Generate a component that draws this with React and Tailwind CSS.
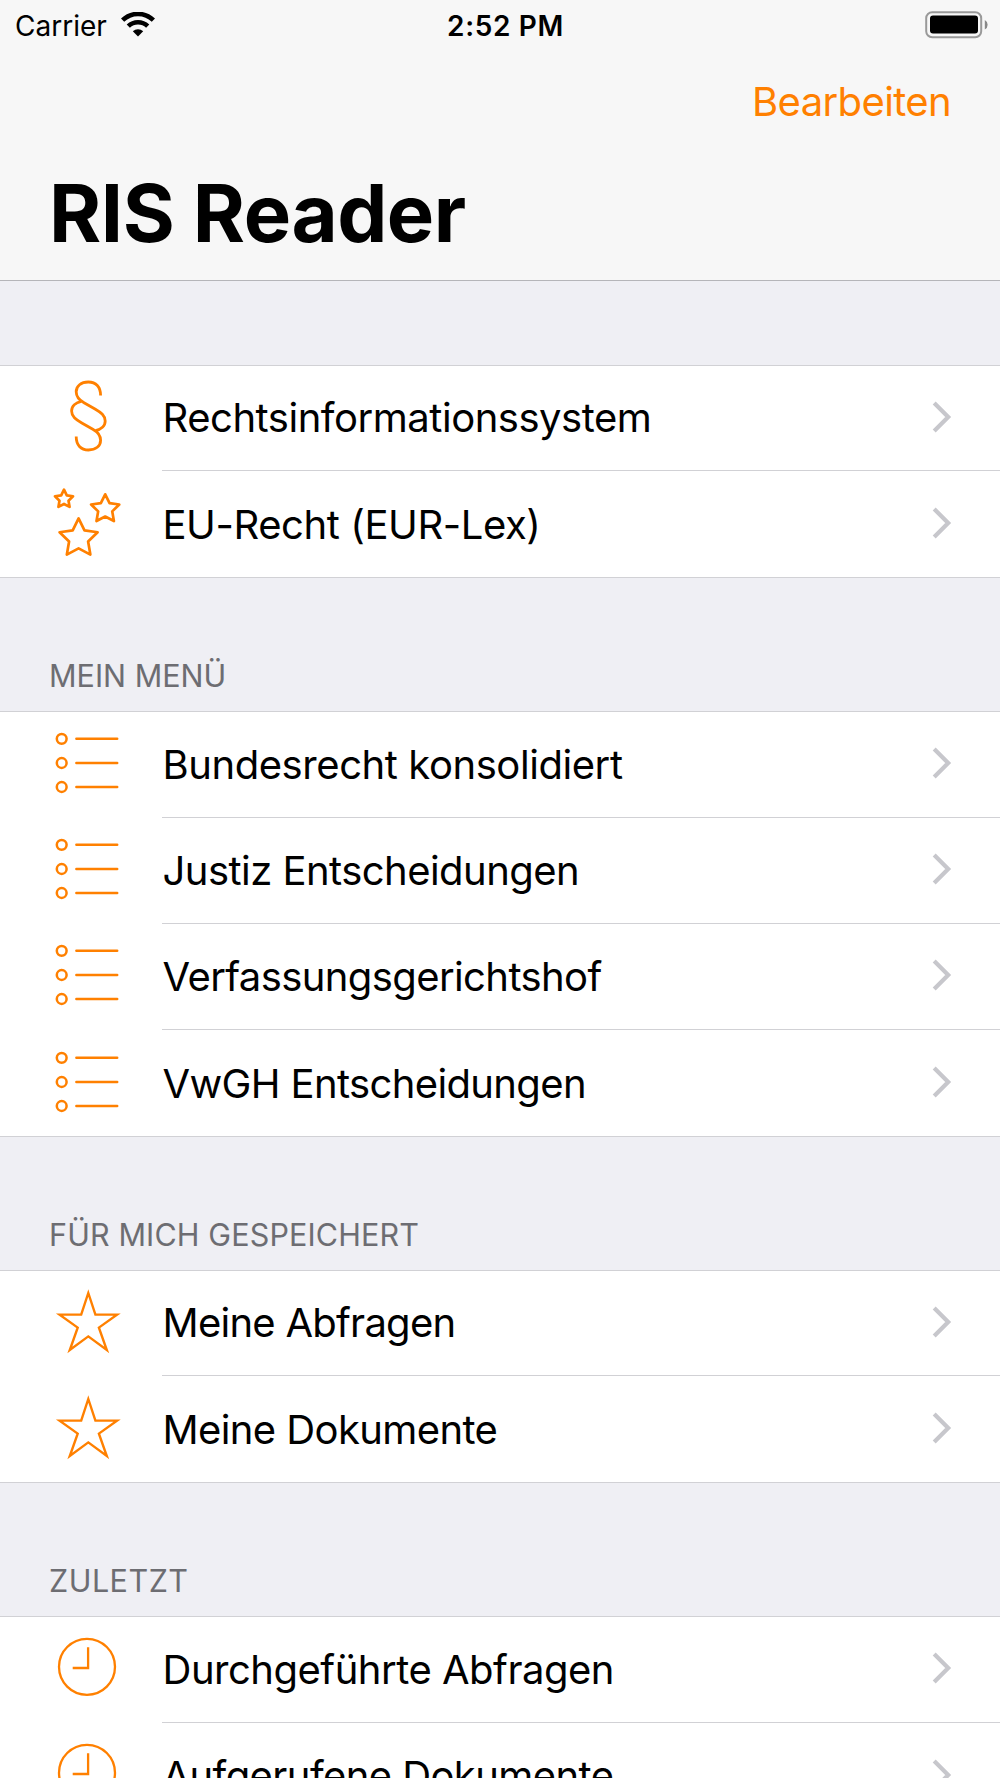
import React from 'react';

const starPath = (cx, cy, r) => {
  const points = [];
  for (let i = 0; i < 10; i++) {
    const radius = i % 2 ? r * 0.5 : r;
    const angle = (Math.PI / 5) * i - Math.PI / 2;
    points.push(`${(cx + radius * Math.cos(angle)).toFixed(2)},${(cy + radius * Math.sin(angle)).toFixed(2)}`);
  }
  return `M${points.join('L')}Z`;
};

const Icon = ({ children, ...props }) => (
  <svg viewBox="0 0 80 80" fill="none" stroke="currentColor" strokeWidth="2.5" className="w-20 h-20 shrink-0 text-[#ff8000]" {...props}>
    {children}
  </svg>
);

const PARAGRAPH_CURVE = 'M52.6 19.5C52.6 11 48 6 40.3 6C33 6 28.2 10 28.2 15.8C28.2 20.5 31 24 36 26.8L47 33C53 36.5 57.2 39.5 57.2 45C57.2 50 53 53.5 47.5 54.7';

const ParagraphIcon = () => (
  <Icon strokeWidth="2.8">
    <path d={PARAGRAPH_CURVE} />
    <path d={PARAGRAPH_CURVE} transform="rotate(180 40.4 40)" />
  </Icon>
);

const StarsIcon = () => (
  <Icon viewBox="0 1 80 80" strokeLinejoin="round" strokeWidth="2.7">
    <path d={starPath(16, 18.2, 9.5)} />
    <path d={starPath(57.2, 28.1, 14.8)} />
    <path d={starPath(30.6, 57.4, 20)} />
  </Icon>
);

const ListIcon = () => (
  <Icon>
    {[16.8, 41, 65].map((y) => (
      <g key={y}>
        <circle cx="13.7" cy={y} r="4.9" />
        <path d={`M28.4 ${y}H69.2`} strokeLinecap="round" />
      </g>
    ))}
  </Icon>
);

const StarIcon = () => (
  <Icon strokeWidth="2.4" strokeMiterlimit="10">
    <path d="M40.3 12L47.4 33.6H69L50.9 46.6L58.8 69L40.3 55.4L21.8 69L29.7 46.6L11.6 33.6H33.2Z" />
  </Icon>
);

const ClockIcon = () => (
  <Icon strokeWidth="2.3">
    <circle cx="39" cy="39.8" r="28" />
    <path d="M40.1 20.3V41H24.7" />
  </Icon>
);

const Chevron = () => (
  <svg viewBox="0 0 24 36" fill="none" stroke="#c7c7cc" strokeWidth="4.2" className="w-6 h-9 mb-[3px]">
    <path d="M6.2 4L20.2 18L6.2 32" />
  </svg>
);

const sections = [
  {
    title: '',
    headerHeight: 'h-[84px]',
    firstRow: 'h-[105px]',
    items: [
      { label: 'Rechtsinformationssystem', icon: ParagraphIcon, tracking: 'tracking-[-0.47px]' },
      { label: 'EU-Recht (EUR-Lex)', icon: StarsIcon, tracking: 'tracking-[-0.42px]', lowered: true },
    ],
  },
  {
    title: 'Mein Menü',
    headerHeight: 'h-[134px] border-t',
    firstRow: 'h-[106px]',
    items: [
      { label: 'Bundesrecht konsolidiert', icon: ListIcon, tracking: 'tracking-[-0.43px]' },
      { label: 'Justiz Entscheidungen', icon: ListIcon, tracking: 'tracking-[-0.54px]' },
      { label: 'Verfassungsgerichtshof', icon: ListIcon, tracking: 'tracking-[-0.6px]' },
      { label: 'VwGH Entscheidungen', icon: ListIcon, tracking: 'tracking-[-0.63px]', lowered: true },
    ],
  },
  {
    title: 'Für mich gespeichert',
    headerHeight: 'h-[134px] border-t',
    headerTracking: 'tracking-[0.13px]',
    firstRow: 'h-[105px]',
    items: [
      { label: 'Meine Abfragen', icon: StarIcon, tracking: 'tracking-[-0.74px]' },
      { label: 'Meine Dokumente', icon: StarIcon, tracking: 'tracking-[-0.6px]', lowered: true },
    ],
  },
  {
    title: 'Zuletzt',
    headerHeight: 'h-[134px] border-t',
    headerTracking: 'tracking-[0.5px]',
    firstRow: 'h-[106px]',
    items: [
      { label: 'Durchgeführte Abfragen', icon: ClockIcon, tracking: 'tracking-[-0.49px]' },
      { label: 'Aufgerufene Dokumente', icon: ClockIcon, tracking: 'tracking-[-0.58px]' },
    ],
  },
];

const StatusBar = () => (
  <div className="grid grid-cols-3 items-center h-[50px] pl-[15px] pr-3">
    <div className="flex items-center gap-3.5 pt-px">
      <span className="text-[28px] leading-none">Carrier</span>
      <svg viewBox="0 0 34 25" className="w-[34px] h-[25px] mb-0.5">
        <g fill="none" stroke="#000" strokeWidth="4.6">
          <path d="M1.6 8.2A22 22 0 0 1 32.4 8.2" />
          <path d="M7.3 14.2A14 14 0 0 1 26.7 14.2" />
        </g>
        <path d="M17 24.5L11.8 19.3A7.4 7.4 0 0 1 22.2 19.3Z" />
      </svg>
    </div>
    <div className="pl-2 pt-px text-center text-[28px] leading-none font-semibold tracking-[0.65px]">2:52 PM</div>
    <svg viewBox="0 0 64 28" className="w-16 h-7 justify-self-end">
      <rect x="2.2" y="1.2" width="55" height="25" rx="6" fill="none" stroke="#999" strokeWidth="2" />
      <rect x="6" y="4.6" width="48" height="18" rx="3" />
      <path d="M60.8 9A5.5 5.5 0 0 1 60.8 18.6Z" fill="#888" />
    </svg>
  </div>
);

const Row = ({ label, icon: RowIcon, tracking, height, lowered, last }) => (
  <div className={`flex bg-white pl-12 ${height}`}>
    <div className={`w-[114px] shrink-0 ${lowered ? 'pt-[11px]' : 'pt-2.5'}`}>
      <RowIcon />
    </div>
    <div className={`flex flex-1 items-center justify-between pr-12 border-[#d1d1d5] ${last ? '' : 'border-b'} ${lowered ? 'pt-px' : ''}`}>
      <span className={`pl-[0.5px] text-[40px] leading-none ${lowered ? 'pt-px' : ''} ${tracking}`}>{label}</span>
      <Chevron />
    </div>
  </div>
);

export default function App() {
  return (
    <div className="w-full h-[1778px] overflow-hidden bg-[#efeff4] text-black font-['Inter',sans-serif]">
      <header className="flex flex-col h-[281px] bg-[#f7f7f7] border-b border-[#b5b5b9]">
        <StatusBar />
        <div className="flex justify-end pr-[49px] pt-8">
          <button className="text-[40px] leading-none text-[#ff8000] tracking-[-0.62px]">Bearbeiten</button>
        </div>
        <h1 className="pl-[49px] mt-[52px] text-[79.6px] leading-none font-bold tracking-[-0.45px] whitespace-nowrap">RIS Reader</h1>
      </header>

      {sections.map((section) => (
        <section key={section.title}>
          <h2 className={`flex items-end pl-[49px] pb-5 border-[#d1d1d5] text-[30.5px] leading-none uppercase text-[#6d6d72] ${section.headerHeight} ${section.headerTracking || ''}`}>
            {section.title}
          </h2>
          <div className="border-t border-[#d1d1d5]">
            {section.items.map((item, i) => (
              <Row
                key={item.label}
                {...item}
                height={i === 0 ? section.firstRow : 'h-[106px]'}
                last={i === section.items.length - 1}
              />
            ))}
          </div>
        </section>
      ))}
    </div>
  );
}
